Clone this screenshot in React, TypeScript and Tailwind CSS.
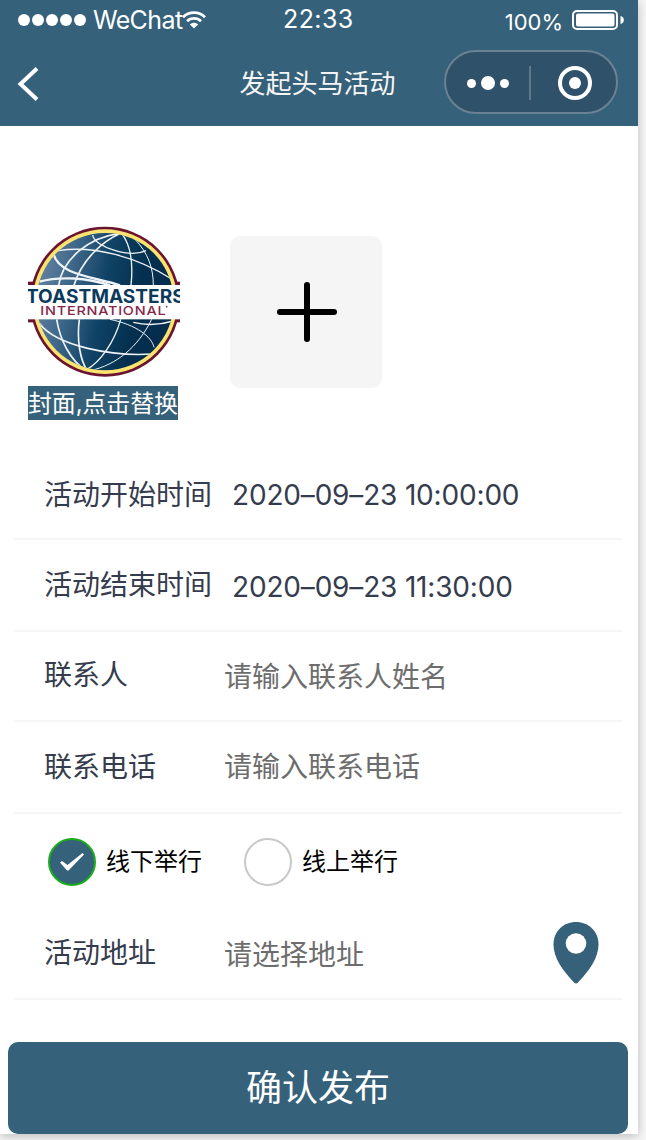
import React from 'react'

interface FieldRowProps {
  label: string
  value?: string
  placeholder?: string
  className?: string
  labelClass?: string
  valueClass?: string
  children?: React.ReactNode
}

function StatusBar() {
  return (
    <div className="flex h-10 items-center text-white">
      <div className="flex w-[283px] items-center pl-[18px]">
        <div className="flex gap-[2.6px]">
          {[0, 1, 2, 3, 4].map((i) => (
            <span key={i} className="size-[11.5px] rounded-full bg-white" />
          ))}
        </div>
        <span className="ml-[7px] w-[89px] text-[25px] leading-10 tracking-[-0.6px]">WeChat</span>
        <svg width="24" height="20" viewBox="0 0 24 20" fill="none" stroke="white" strokeWidth="2.7">
          <path d="M1 7.2C7 1.2 17 1.2 23 7.2" />
          <path d="M5 11.2C9 7.4 15 7.4 19 11.2" />
          <path d="M12 18.6 7.8 14.4C10.2 12.3 13.800 12.3 16.2 14.4Z" fill="white" stroke="none" />
        </svg>
      </div>
      <span className="pb-0.5 text-[25px] leading-[38px] tracking-[0.4px]">22:33</span>
      <div className="flex flex-1 items-center justify-end pr-[14px]">
        <span className="pt-1 text-[22px] leading-9">100%</span>
        <svg className="ml-[9px]" width="52" height="20" viewBox="0 0 52 20">
          <rect x="1" y="1" width="44" height="18" rx="4" fill="none" stroke="white" strokeWidth="2" />
          <rect x="4" y="3.500" width="38.500" height="13" rx="2" fill="white" />
          <path d="M48.500 6C53 7 53 13 48.500 14Z" fill="white" />
        </svg>
      </div>
    </div>
  )
}

function NavBar() {
  return (
    <div className="flex h-[86px] items-center pb-0.5">
      <div className="flex-1 pl-[17px] pt-1">
        <svg width="22" height="34" viewBox="0 0 22 34" fill="none" stroke="white" strokeWidth="4">
          <path d="M20 1.5 3.5 17 20 32.5" />
        </svg>
      </div>
      <h1 className="pt-0.5 text-[26px] text-[#f5f5f5]">发起头马活动</h1>
      <div className="flex flex-1 justify-end pr-5">
        <div className="flex h-16 w-[174px] items-center rounded-full border-2 border-[#6a8294] bg-[#30516a] pt-0.5">
          <div className="flex flex-1 items-center justify-center gap-[5px]">
            <span className="size-[9px] rounded-full bg-white" />
            <span className="size-3.5 rounded-full bg-white" />
            <span className="size-[9px] rounded-full bg-white" />
          </div>
          <div className="h-[34px] w-0.5 bg-[#5f788b]" />
          <div className="flex flex-1 items-center justify-center pl-0.5">
            <div className="flex size-[34px] items-center justify-center rounded-full border-4 border-white">
              <span className="size-3 rounded-full bg-white" />
            </div>
          </div>
        </div>
      </div>
    </div>
  )
}

function ClubLogo() {
  return (
    <svg width="152" height="152" viewBox="54 48 456 456">
      <defs>
        <linearGradient id="ocean" x1="0" y1="0.3" x2="1" y2="0.5">
          <stop offset="0" stopColor="#6583a3" />
          <stop offset="0.22" stopColor="#426a8c" />
          <stop offset="0.5" stopColor="#0f4265" />
          <stop offset="0.75" stopColor="#04304f" />
          <stop offset="1" stopColor="#062b4d" />
        </linearGradient>
        <clipPath id="globe">
          <circle cx="285" cy="275" r="206" />
        </clipPath>
      </defs>
      <circle cx="285" cy="275" r="225" fill="#6a1430" />
      <rect x="54" y="215" width="456" height="122" fill="#6a1430" />
      <circle cx="285" cy="275" r="217" fill="#fbe36f" />
      <circle cx="285" cy="275" r="206" fill="url(#ocean)" />
      <g clipPath="url(#globe)" fill="none" stroke="#eef3f7" strokeWidth="5">
        <path d="M332 70C240 80 158 145 146 226" />
        <path d="M332 70C275 95 215 150 192 226" />
        <path d="M335 70C362 105 370 160 363 226" strokeWidth="4" />
        <path d="M375 88C415 130 430 175 430 226" strokeWidth="3" />
        <path d="M248 75C252 110 360 145 408 122" strokeWidth="4" />
        <path d="M145 122C250 105 380 140 490 210" strokeWidth="4" />
        <path d="M130 130C145 195 250 200 330 226" strokeWidth="7" />
        <path d="M88 215C150 198 230 203 300 226" strokeWidth="7" />
        <path d="M140 328C150 390 180 450 228 482" />
        <path d="M208 328C200 390 210 450 232 482" />
        <path d="M332 328C315 390 275 455 225 482" strokeWidth="4" />
        <path d="M425 328C385 410 320 465 240 482" strokeWidth="3" />
        <path d="M88 340C140 410 310 440 428 432" strokeWidth="5" />
        <path d="M300 328C380 345 425 380 432 412" strokeWidth="3" />
        <path d="M370 337C410 347 450 345 490 333" strokeWidth="4" />
      </g>
      <rect x="54" y="225" width="456" height="103" fill="white" />
      <text x="48" y="278" textLength="476" lengthAdjust="spacingAndGlyphs" fontSize="55" fontWeight="700" fill="#0c3a5c">
        TOASTMASTERS
      </text>
      <text
        x="91"
        y="315"
        textLength="378"
        lengthAdjust="spacingAndGlyphs"
        fontSize="37"
        fontWeight="500"
        letterSpacing="2"
        fill="#86284a"
      >
        INTERNATIONAL
      </text>
      <circle cx="470" cy="290" r="2.5" fill="#86284a" />
    </svg>
  )
}

function FieldRow({
  label,
  value,
  placeholder,
  className = 'h-[92px]',
  labelClass = '',
  valueClass = 'pl-3',
  children,
}: FieldRowProps) {
  return (
    <div className={`ml-[14px] mr-4 flex items-center border-b-2 border-[#f6f6f6] pl-[30px] text-[28px] leading-10 ${className}`}>
      <label className={`w-[168px] text-[#353c4d] ${labelClass}`}>{label}</label>
      <div className={`flex-1 ${value ? 'tracking-[-0.17px] text-[#353c4d]' : 'text-[#6d6d6d]'} ${valueClass}`}>
        {value ?? placeholder}
      </div>
      {children}
    </div>
  )
}

function RadioOption({ label, checked = false }: { label: string; checked?: boolean }) {
  return (
    <div className="flex items-center gap-2.5">
      <span
        className={`flex size-12 items-center justify-center rounded-full border-2 ${
          checked ? 'border-[#1aad19] bg-[#36617a]' : 'border-[#c8c8c8] bg-white'
        }`}
      >
        {checked && (
          <svg width="26" height="20" viewBox="0 0 26 20">
            <path d="M1 10.500 3 9 8.500 13 23.500 1 25 2.500 9.500 18.500H8Z" fill="white" />
          </svg>
        )}
      </span>
      <span className="text-2xl text-black">{label}</span>
    </div>
  )
}

export default function App() {
  return (
    <div className="h-[1140px] w-[646px] overflow-hidden bg-[#f7f7f7] font-[Inter,'Noto_Sans_CJK_SC',sans-serif]">
      <div className="flex h-[1134px] w-[638px] flex-col bg-white shadow-[0_2px_10px_rgba(0,0,0,0.25)]">
        <header className="h-[126px] bg-[#36617a]">
          <StatusBar />
          <NavBar />
        </header>

        {/* Cover upload */}
        <div className="flex h-[322px] pl-7 pt-[100px]">
          <div className="w-[152px]">
            <ClubLogo />
            <span className="mt-2 inline-block h-[34px] w-[150px] whitespace-nowrap bg-[#36617a] text-2xl leading-[36px] tracking-[-0.15px] text-white">
              封面,点击替换
            </span>
          </div>
          <div className="ml-[50px] mt-2.5 flex size-[152px] items-center justify-center rounded-[10px] bg-[#f5f5f5] pl-px">
            <svg width="60" height="60" viewBox="0 0 60 60" stroke="black" strokeWidth="6" strokeLinecap="round">
              <path d="M30 3V57M3 30H57" />
            </svg>
          </div>
        </div>

        {/* Form fields */}
        <FieldRow label="活动开始时间" value="2020–09–23 10:00:00" labelClass="pt-1" valueClass="pl-5 pt-[3px]" />
        <FieldRow label="活动结束时间" value="2020–09–23 11:30:00" valueClass="pl-5 pt-[3px]" />
        <FieldRow label="联系人" placeholder="请输入联系人姓名" className="h-[90px]" labelClass="pb-0.5" valueClass="pl-3 pt-0.5" />
        <FieldRow label="联系电话" placeholder="请输入联系电话" />
        <div className="flex h-24 items-center gap-[42px] pl-12">
          <RadioOption label="线下举行" checked />
          <RadioOption label="线上举行" />
        </div>
        <FieldRow label="活动地址" placeholder="请选择地址" className="h-[90px]" labelClass="pb-0.5" valueClass="pl-3 pt-0.5">
          <svg className="mb-0.5 mr-[23px]" width="46" height="62" viewBox="0 0 46 62">
            <path
              d="M23 0C10 0 .5 9.5.5 22.5.5 36 10 49 21 60.5Q23 62.5 25 60.5C36 49 45.500 36 45.500 22.500 45.500 9.500 36 0 23 0Z"
              fill="#36617a"
            />
            <circle cx="23" cy="21.500" r="10.300" fill="white" />
          </svg>
        </FieldRow>

        <button className="mx-2 mt-[42px] mr-2.5 h-[92px] rounded-[10px] bg-[#36617a] text-4xl text-white">
          确认发布
        </button>
      </div>
    </div>
  )
}
